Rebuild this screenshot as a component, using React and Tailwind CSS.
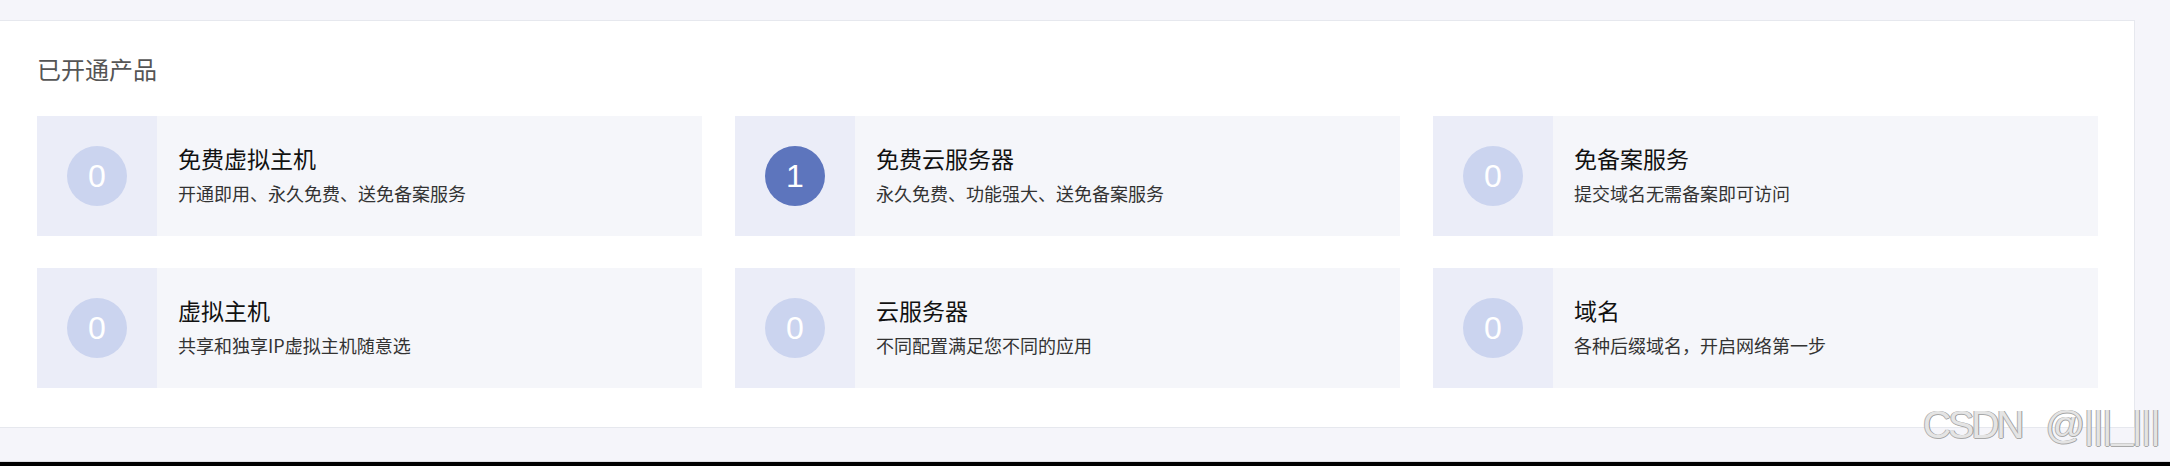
const products = [
  { count: 0, name: '免费虚拟主机', desc: '开通即用、永久免费、送免备案服务' },
  { count: 1, name: '免费云服务器', desc: '永久免费、功能强大、送免备案服务' },
  { count: 0, name: '免备案服务', desc: '提交域名无需备案即可访问' },
  { count: 0, name: '虚拟主机', desc: '共享和独享IP虚拟主机随意选' },
  { count: 0, name: '云服务器', desc: '不同配置满足您不同的应用' },
  { count: 0, name: '域名', desc: '各种后缀域名，开启网络第一步' },
]

function ProductCard({ count, name, desc }) {
  const active = count > 0
  return (
    <div className="flex h-[120px] bg-[#f5f6fa]">
      <div className="flex w-[120px] shrink-0 items-center justify-center bg-[#ebedf8]">
        <div
          className={
            active
              ? 'flex h-[60px] w-[60px] items-center justify-center rounded-full bg-[#5d75bd]'
              : 'flex h-[60px] w-[60px] items-center justify-center rounded-full bg-[#cbd4ef]'
          }
        >
          <span className="font-['Liberation_Sans',Arial,sans-serif] text-[32px] leading-none text-white">
            {count}
          </span>
        </div>
      </div>
      <div className="flex flex-col justify-center pb-[4px] pl-[21px]">
        <div className="text-[23px] leading-[23px] text-[#111]">{name}</div>
        <div className="mt-[14px] text-[18px] leading-[18px] text-[#333]">{desc}</div>
      </div>
    </div>
  )
}

export default function App() {
  return (
    <div className="relative flex h-[466px] w-[2170px] flex-col overflow-hidden bg-[#f5f5fa] font-['Noto_Sans_CJK_SC','Noto_Sans',sans-serif]">
      {/* top band */}
      <div className="h-[20px] shrink-0" />

      <div className="flex shrink-0">
        {/* opened products panel */}
        <div className="h-[408px] w-[2135px] border-y border-r border-[#e6e8ee] bg-white pl-[37px] pr-[36px] pt-[36px]">
          <h2 className="mb-[35px] text-[24px] font-normal leading-[24px] text-[#555]">已开通产品</h2>
          <div className="grid grid-cols-3 gap-x-[33px] gap-y-[32px]">
            {products.map((p) => (
              <ProductCard key={p.name} {...p} />
            ))}
          </div>
        </div>
        <div className="flex-1" />
      </div>

      <div className="flex-1 border-b border-[#dcdce2]" />
      <div className="h-[4px] shrink-0 bg-black" />

      {/* watermark */}
      <div className="absolute left-[1923px] top-[405px] flex whitespace-nowrap font-['Liberation_Sans',Arial,sans-serif] text-[39px] leading-[39px] text-[#e4e4e4] [text-shadow:1px_0_0_#9a9a9a,-1px_0_0_#b0b0b0,0_1px_0_#a8a8a8]">
        <span className="tracking-[-3px]">CSDN</span>
        <span className="ml-[24px] tracking-[-1px]">@|||_|||</span>
      </div>
    </div>
  )
}
